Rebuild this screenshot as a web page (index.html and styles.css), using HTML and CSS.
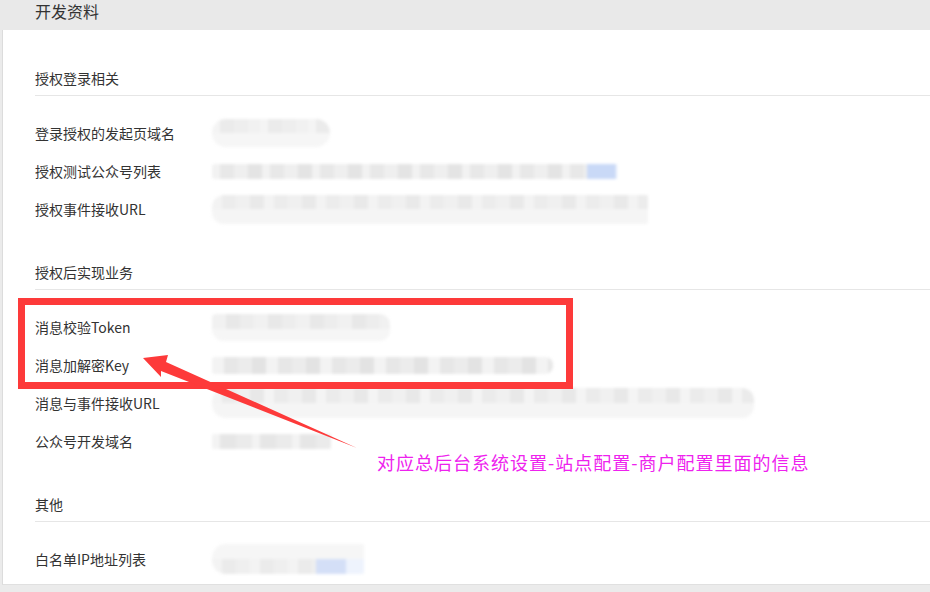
FILE: index.html
```html
<!DOCTYPE html>
<html lang="zh-CN">
<head>
    <meta charset="UTF-8">
    <meta name="viewport" content="width=device-width, initial-scale=1.0">
    <title>开发资料</title>
    <link rel="stylesheet" href="styles.css">
</head>
<body>
    <div class="page">
        <div class="panel-head">开发资料</div>

        <div class="panel">
            <section class="group">
                <h3 class="group-title">授权登录相关</h3>
                <ul class="rows">
                    <li class="row"><span class="label">登录授权的发起页域名</span><span class="val val-domain"></span></li>
                    <li class="row"><span class="label">授权测试公众号列表</span><span class="val val-list"></span></li>
                    <li class="row"><span class="label">授权事件接收URL</span><span class="val val-event"></span></li>
                </ul>
            </section>

            <section class="group">
                <h3 class="group-title">授权后实现业务</h3>
                <ul class="rows">
                    <li class="row"><span class="label">消息校验Token</span><span class="val val-token"></span></li>
                    <li class="row"><span class="label">消息加解密Key</span><span class="val val-key"></span></li>
                    <li class="row"><span class="label">消息与事件接收URL</span><span class="val val-msg"></span></li>
                    <li class="row"><span class="label">公众号开发域名</span><span class="val val-dev"></span></li>
                </ul>
            </section>

            <section class="group">
                <h3 class="group-title">其他</h3>
                <ul class="rows">
                    <li class="row"><span class="label">白名单IP地址列表</span><span class="val val-ip"></span></li>
                </ul>
            </section>
        </div>

        <!-- annotation drawn over the screenshot -->
        <div class="mark-box"></div>
        <svg class="mark-arrow" width="930" height="592" viewBox="0 0 930 592">
            <polygon points="143,358 168,355 166,362 357,448 161,371 161,377" fill="#fd3a3a"/>
        </svg>
        <div class="mark-note">对应总后台系统设置-站点配置-商户配置里面的信息</div>
    </div>
</body>
</html>
```

FILE: styles.css
```css
body {
    margin: 0;
    background-color: #ebebeb;
    font-family: "Noto Sans CJK SC", "Noto Sans", sans-serif;
    color: #333;
    overflow: hidden;
}

.page {
    position: relative;
    width: 930px;
    height: 592px;
}

.panel-head {
    height: 30px;
    padding-left: 35px;
    font-size: 16px;
    line-height: 23px;
    color: #333;
    background-color: #e9e9e9;
}

.panel {
    margin-left: 2px;
    padding: 38px 0 6px 32px;
    background: #fff;
    border-left: 1px solid #dcdcdc;
    border-bottom: 1px solid #e0e0e0;
}

.group + .group {
    margin-top: 34px;
}

.group-title {
    margin: 0;
    padding-bottom: 7px;
    font-size: 14px;
    font-weight: normal;
    line-height: 20px;
    border-bottom: 1px solid #e6e6e6;
}

.rows {
    list-style: none;
    margin: 0;
    padding: 18px 0 0;
}

.row {
    display: flex;
    align-items: center;
    height: 38px;
    font-size: 14px;
}

.label {
    width: 177px;
    flex-shrink: 0;
}

/* blurred values */
.val {
    display: block;
    height: 16px;
    border-radius: 6px;
    filter: blur(1.5px);
    background:
        repeating-linear-gradient(90deg, #ececec 0 14px, #f3f3f3 14px 26px, #e7e7e7 26px 38px, #f0f0f0 38px 50px);
}

.val-domain {
    width: 118px;
    height: 28px;
    border-radius: 14px;
    background:
        linear-gradient(#0000 0 50%, #f6f6f6 50%),
        repeating-linear-gradient(90deg, #f4f4f4 0 8px, #ebebeb 8px 22px, #eeeeee 22px 36px, #f1f1f1 36px 48px);
}

.val-list {
    width: 406px;
    height: 15px;
    border-radius: 3px 0 0 3px;
    background:
        linear-gradient(90deg, #0000 0 375px, #c9d9f7 375px 404px, #f6f9fe 404px),
        repeating-linear-gradient(90deg, #f2f2f2 0 8px, #e8e8e8 8px 22px, #efefef 22px 36px, #e4e4e4 36px 50px);
}

.val-event {
    width: 436px;
    height: 29px;
    border-radius: 12px 2px 2px 12px;
    background:
        linear-gradient(#0000 0 50%, #f5f5f5 50%),
        repeating-linear-gradient(90deg, #f3f3f3 0 10px, #ececec 10px 24px, #f0f0f0 24px 38px, #e9e9e9 38px 52px);
}

.val-token {
    width: 178px;
    height: 27px;
    border-radius: 4px 10px 10px 12px;
    background:
        linear-gradient(#0000 0 55%, #f6f6f6 55%),
        repeating-linear-gradient(90deg, #f1f1f1 0 14px, #e8e8e8 14px 28px, #ededed 28px 42px);
}

.val-key {
    width: 341px;
    height: 17px;
    border-radius: 3px 8px 8px 3px;
    background:
        repeating-linear-gradient(90deg, #f3f3f3 0 12px, #e7e7e7 12px 26px, #ececec 26px 40px, #e3e3e3 40px 54px);
}

.val-msg {
    width: 542px;
    height: 30px;
    border-radius: 14px 12px 12px 14px;
    background:
        linear-gradient(#0000 0 50%, #f5f5f5 50%),
        repeating-linear-gradient(90deg, #f4f4f4 0 10px, #ebebeb 10px 24px, #f0f0f0 24px 38px, #e8e8e8 38px 52px);
}

.val-dev {
    width: 119px;
    height: 15px;
    border-radius: 2px;
    background:
        repeating-linear-gradient(90deg, #f3f3f3 0 8px, #e6e6e6 8px 24px, #ebebeb 24px 40px);
}

.val-ip {
    width: 152px;
    height: 30px;
    border-radius: 14px 2px 2px 14px;
    background:
        linear-gradient(90deg, #0000 0 104px, #d4dff7 104px 134px, #eef3fd 134px) bottom / 100% 50% no-repeat,
        linear-gradient(#f6f6f6 0 50%, #0000 50%),
        repeating-linear-gradient(90deg, #f3f3f3 0 10px, #ebebeb 10px 24px, #efefef 24px 38px);
}

/* annotation */
.mark-box {
    position: absolute;
    left: 18px;
    top: 298px;
    width: 555px;
    height: 91px;
    box-sizing: border-box;
    border: 7px solid #fd3a3a;
}

.mark-arrow {
    position: absolute;
    left: 0;
    top: 0;
}

.mark-note {
    position: absolute;
    left: 377px;
    top: 450px;
    font-size: 18px;
    line-height: 24px;
    letter-spacing: 1px;
    color: #ee22ee;
    white-space: nowrap;
}
```
